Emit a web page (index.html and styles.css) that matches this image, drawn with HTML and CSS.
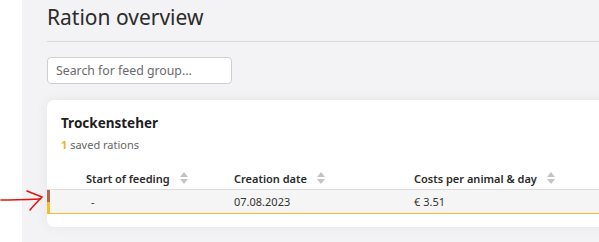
FILE: index.html
```html
<!DOCTYPE html>
<html>
<head>
    <title>Ration overview</title>
    <link rel="stylesheet" href="styles.css">
</head>
<body>
    <div class="sidebar"></div>
    <div class="main">
        <h1 class="page-title">Ration overview</h1>
        <div class="divider"></div>
        <input class="search" placeholder="Search for feed group..." />
        <div class="card">
            <div class="card-title">Trockensteher</div>
            <div class="card-sub"><span class="count">1</span> saved rations</div>
            <div class="table">
                <div class="row head">
                    <div class="cell first">Start of feeding <span class="sort"></span></div>
                    <div class="cell">Creation date <span class="sort"></span></div>
                    <div class="cell">Costs per animal &amp; day <span class="sort"></span></div>
                </div>
                <div class="row item">
                    <div class="cell first dash">-</div>
                    <div class="cell">07.08.2023</div>
                    <div class="cell">€ 3.51</div>
                </div>
            </div>
        </div>
    </div>
    <svg class="arrow" width="46" height="28" viewBox="0 0 46 28">
        <path d="M1 14 C12 14 27 13.5 40 13" />
        <path d="M27 5 C32 7 37 9 42 11 C38 15 34 19 30 24" />
    </svg>
</body>
</html>
```

FILE: styles.css
```css
html, body {
    height: 100%;
    margin: 0;
    padding: 0;
}

body {
    display: flex;
    overflow: hidden;
    background-color: #fff;
    font-family: "Noto Sans", "Open Sans", sans-serif;
    color: #222;
}

.sidebar {
    width: 22px;
    flex: none;
    background-color: #fff;
}

.main {
    flex: 1;
    background-color: #f3f3f5;
    padding-left: 25px;
    overflow: hidden;
}

.page-title {
    margin: 0;
    padding-top: 3px;
    font-size: 21px;
    line-height: 28px;
    font-weight: 400;
    color: #2b2b2b;
}

.divider {
    margin-top: 10px;
    border-top: 1px solid #d9d9dc;
}

.search {
    display: block;
    margin-top: 15px;
    box-sizing: border-box;
    width: 185px;
    height: 27px;
    padding: 0 8px;
    border: 1px solid #cfcfd2;
    border-radius: 4px;
    background: #fff;
    font-family: inherit;
    font-size: 12.3px;
}

.search::placeholder {
    color: #6a6a6a;
}

.card {
    margin-top: 16px;
    margin-right: -20px;
    height: 127px;
    background: #fff;
    border-radius: 7px;
    box-shadow: 0 0 14px rgba(0, 0, 0, 0.06);
    padding-top: 14px;
    box-sizing: border-box;
}

.card-title {
    padding-left: 14px;
    font-size: 13.5px;
    font-weight: 700;
    line-height: 18px;
    color: #1e1e1e;
}

.card-sub {
    padding-left: 14px;
    margin-top: 5px;
    font-size: 11px;
    line-height: 16px;
    color: #666;
}

.count {
    color: #f1b41c;
    font-weight: 700;
}

.table {
    margin-top: 14px;
    font-size: 11px;
}

.row {
    display: grid;
    grid-template-columns: 187px 180px 1fr;
    align-items: center;
}

.row.head {
    height: 22px;
    font-weight: 600;
    color: #2a2a2a;
    border-bottom: 1px solid #dcdcdc;
}

.row.item {
    grid-template-columns: 184px 180px 1fr;
    height: 23px;
    background: #f5f5f5;
    border-bottom: 1px solid #dcdcdc;
    border-left: 3px solid;
    border-image: linear-gradient(#b4664a 50%, #f4bf2a 50%) 1;
    border-right: 0;
    border-top: 0;
    color: #333;
}

.cell {
    display: flex;
    align-items: center;
    white-space: nowrap;
}

.cell.first {
    padding-left: 39px;
}

.row.item .first {
    padding-left: 41px;
}

.sort {
    display: inline-block;
    margin-left: 10px;
    width: 8px;
    height: 12px;
    position: relative;
}

.sort::before,
.sort::after {
    content: "";
    position: absolute;
    left: 0;
    border-left: 4px solid transparent;
    border-right: 4px solid transparent;
}

.sort::before {
    top: 0;
    border-bottom: 5px solid #c4c4c4;
}

.sort::after {
    bottom: 0;
    border-top: 5px solid #c4c4c4;
}

.arrow {
    position: absolute;
    left: 0;
    top: 186px;
    fill: none;
    stroke: #e8100c;
    stroke-width: 1.6;
    stroke-linecap: round;
}
```
